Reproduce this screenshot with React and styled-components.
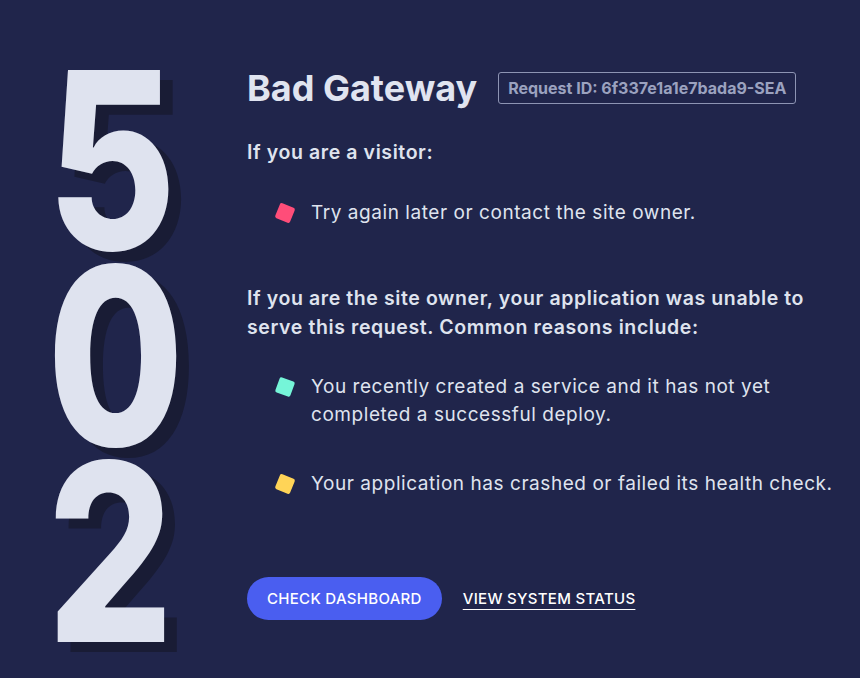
import styled, { createGlobalStyle } from "styled-components";

const GlobalStyle = createGlobalStyle`
  html, body {
    margin: 0;
    padding: 0;
    background: #20254b;
  }
  body {
    font-family: Inter, "Noto Sans", sans-serif;
    color: #dfe3ee;
  }
`;

const Page = styled.div`
  display: flex;
  min-height: 678px;
  background: #20254b;
  overflow: hidden;
`;

const DigitCol = styled.div`
  width: 247px;
  flex-shrink: 0;
  display: flex;
  flex-direction: column;
  padding: 62px 0 0 47px;
  box-sizing: border-box;
`;

const Digit = styled.span`
  display: block;
  height: 196px;
  font-family: Inter, sans-serif;
  font-weight: 800;
  font-size: 248px;
  line-height: 196px;
  color: #dfe3ef;
  text-shadow: 16px 10px 0 #191c35;
  transform: scaleX(0.8);
  transform-origin: left center;
`;

const Content = styled.div`
  flex: 1;
  padding-top: 64px;
`;

const TitleRow = styled.div`
  display: flex;
  align-items: center;
  gap: 21px;
`;

const Title = styled.h1`
  margin: 0;
  font-size: 36px;
  font-weight: 700;
  line-height: 48px;
  color: #e0e4f0;
`;

const RequestId = styled.span`
  border: 1px solid #8d94b3;
  border-radius: 3px;
  padding: 5px 9px;
  font-size: 16px;
  font-weight: 700;
  color: #9ba2bf;
  line-height: 20px;
`;

const Lead = styled.p`
  margin: ${(p) => p.$top}px 0 0;
  font-size: 19.5px;
  font-weight: 600;
  letter-spacing: 0.6px;
  line-height: 29px;
  max-width: 570px;
`;

const List = styled.ul`
  list-style: none;
  margin: ${(p) => p.$top}px 0 0;
  padding: 0 0 0 30px;
  display: flex;
  flex-direction: column;
  gap: ${(p) => p.$gap || 0}px;
`;

const Item = styled.li`
  display: flex;
  align-items: flex-start;
  gap: 18px;
  font-size: 19px;
  letter-spacing: 0.55px;
  line-height: 28px;
  color: #dfe3ee;
  max-width: 560px;
`;

const Bullet = styled.span`
  flex-shrink: 0;
  width: 16px;
  height: 16px;
  margin-top: 6px;
  border-radius: 2px;
  background: ${(p) => p.$color};
  transform: rotate(${(p) => p.$rot || 20}deg);
`;

const Actions = styled.div`
  display: flex;
  align-items: center;
  gap: 21px;
  margin-top: 79px;
`;

const Button = styled.a`
  display: inline-flex;
  align-items: center;
  justify-content: center;
  height: 43px;
  padding: 0 20px;
  border-radius: 22px;
  background: #4a5ef0;
  color: #ffffff;
  font-size: 15px;
  font-weight: 500;
  letter-spacing: 0.3px;
  text-decoration: none;
`;

const TextLink = styled.a`
  color: #ffffff;
  font-size: 15px;
  font-weight: 500;
  letter-spacing: 0.3px;
  text-decoration: underline;
  text-underline-offset: 5px;
  text-decoration-thickness: 1px;
`;

export default function App() {
  return (
    <Page>
      <GlobalStyle />
      <DigitCol>
        <Digit>5</Digit>
        <Digit>0</Digit>
        <Digit>2</Digit>
      </DigitCol>
      <Content>
        <TitleRow>
          <Title>Bad Gateway</Title>
          <RequestId>Request ID: 6f337e1a1e7bada9-SEA</RequestId>
        </TitleRow>
        <Lead $top={26}>If you are a visitor:</Lead>
        <List $top={32}>
          <Item>
            <Bullet $color="#ff4d79" $rot={22} />
            Try again later or contact the site owner.
          </Item>
        </List>
        <Lead $top={57}>
          If you are the site owner, your application was unable to serve this
          request. Common reasons include:
        </Lead>
        <List $top={31} $gap={41}>
          <Item>
            <Bullet $color="#75f5d8" $rot={20} />
            You recently created a service and it has not yet completed a
            successful deploy.
          </Item>
          <Item>
            <Bullet $color="#ffd457" $rot={22} />
            Your application has crashed or failed its health check.
          </Item>
        </List>
        <Actions>
          <Button href="#">CHECK DASHBOARD</Button>
          <TextLink href="#">VIEW SYSTEM STATUS</TextLink>
        </Actions>
      </Content>
    </Page>
  );
}
